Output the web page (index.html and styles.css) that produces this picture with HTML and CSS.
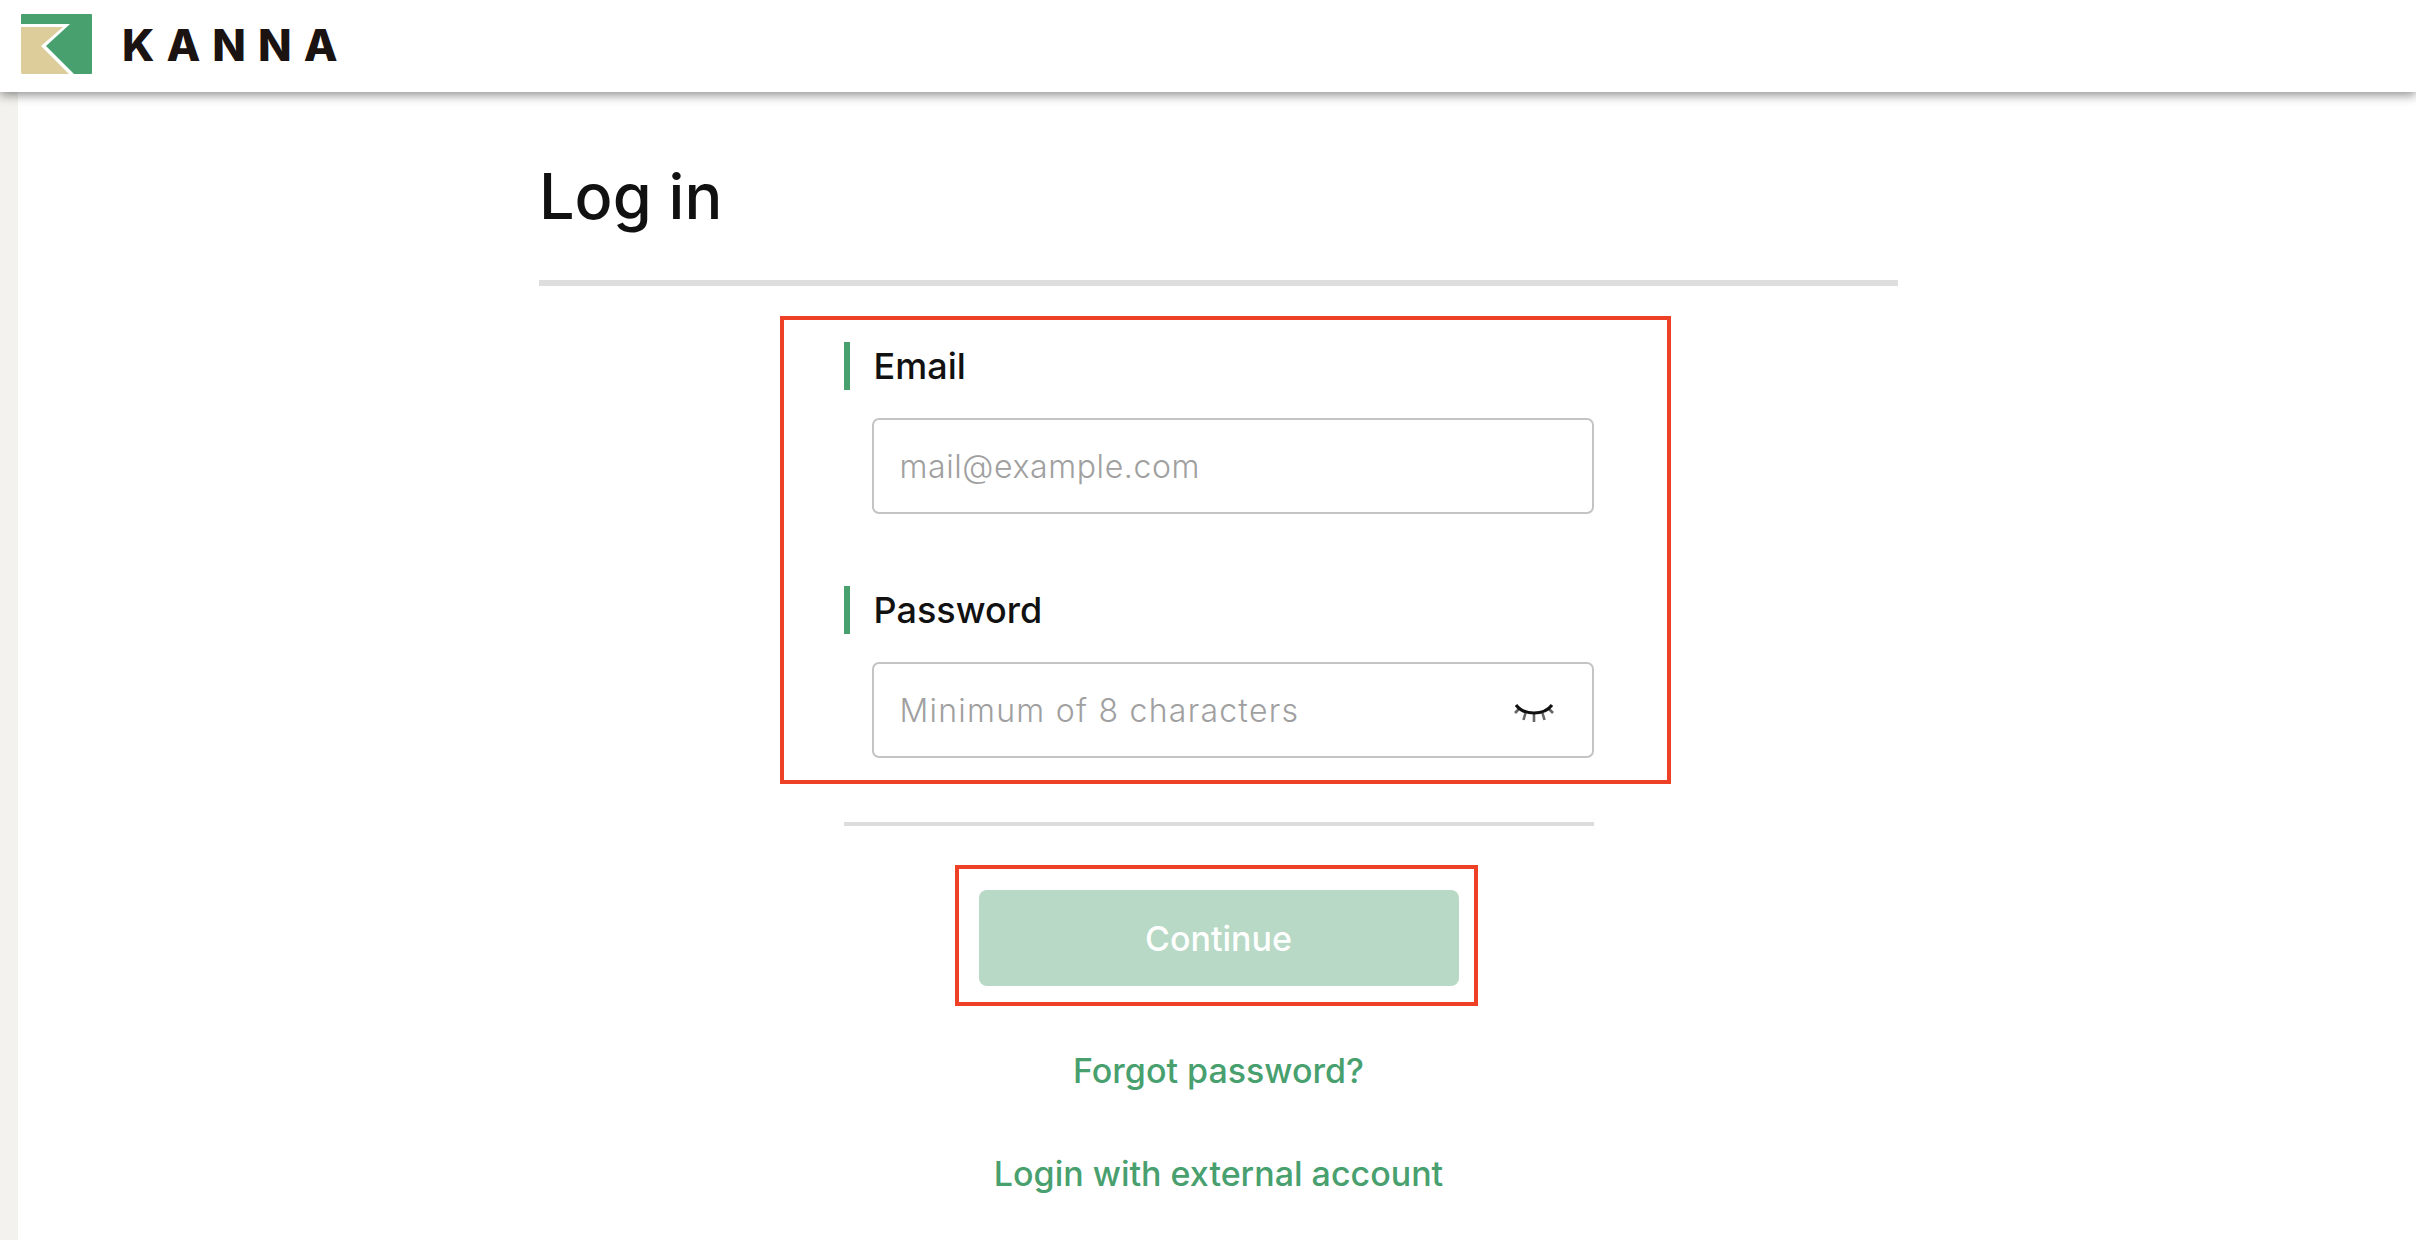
FILE: index.html
```html
<!DOCTYPE html>
<html lang="en">
<head>
<meta charset="utf-8">
<title>Log in - KANNA</title>
<link rel="stylesheet" href="styles.css">
</head>
<body>
<header class="topbar">
  <svg class="logo-mark" width="71" height="60" viewBox="0 0 71 60" aria-hidden="true">
    <rect width="71" height="60" rx="1" fill="#48a06f"/>
    <polygon points="0,10 49,10 25,32 53,60 0,60" fill="#fff"/>
    <polygon points="0,13 42,13 20,32 48,60 1,60 0,59" fill="#dccd9b"/>
  </svg>
  <span class="wordmark">KANNA</span>
</header>
<div class="shell">
  <aside class="rail"></aside>
  <main class="content">
    <h1 class="title">Log in</h1>
    <form class="form">
      <div class="field">
        <label class="label" for="email">Email</label>
        <div class="control">
          <input class="input input-email" id="email" type="text" placeholder="mail@example.com">
        </div>
      </div>
      <div class="field field-next">
        <label class="label" for="password">Password</label>
        <div class="control">
          <input class="input input-password" id="password" type="password" placeholder="Minimum of 8 characters">
          <svg class="eye" width="40" height="24" viewBox="0 0 40 24" aria-hidden="true">
            <g stroke="#666" stroke-width="2.600" fill="none">
              <path d="M5 9 1 13"/>
              <path d="M11.500 13 9.500 20"/>
              <path d="M20 14 20 22"/>
              <path d="M28.500 13 30.500 20"/>
              <path d="M35 9 39 13"/>
            </g>
            <path d="M2 5C10 15.700 30 15.700 38 5" stroke="#111" stroke-width="3" fill="none"/>
          </svg>
        </div>
      </div>
      <hr class="divider">
      <button class="submit" type="button">Continue</button>
    </form>
    <a class="link link-forgot" href="#">Forgot password?</a>
    <a class="link link-external" href="#">Login with external account</a>
    <div class="mark mark-fields"></div>
    <div class="mark mark-button"></div>
  </main>
</div>
</body>
</html>
```
FILE: styles.css
```css
* { box-sizing: border-box; }
html, body { margin: 0; height: 100%; }
body {
  background: #fff;
  font-family: Inter, "Noto Sans", sans-serif;
  color: #111;
  overflow: hidden;
}
.topbar {
  position: relative;
  z-index: 2;
  display: flex;
  align-items: center;
  height: 92px;
  padding: 0 0 0 21px;
  background: #fff;
  box-shadow: 0 3px 10px rgba(0, 0, 0, .45);
}
.logo-mark { display: block; margin-top: -4px; }
.wordmark {
  margin: -3px 0 0 30px;
  font-size: 44px;
  line-height: 1;
  font-weight: 800;
  letter-spacing: 12px;
  color: #1a1311;
}
.shell { display: flex; height: 1148px; }
.rail { flex: 0 0 18px; background: #f3f2ee; }
.content {
  position: relative;
  flex: 1;
  padding: 0 518px 0 521px;
  display: flex;
  flex-direction: column;
  align-items: center;
}
.title {
  align-self: stretch;
  height: 194px;
  margin: 0;
  padding-top: 68px;
  border-bottom: 6px solid #dedede;
  font-size: 63px;
  line-height: 72px;
  font-weight: 500;
  color: #111;
}
.form {
  width: 750px;
  margin-top: 56px;
  display: flex;
  flex-direction: column;
}
.label {
  display: flex;
  align-items: center;
  height: 48px;
  padding-left: 24px;
  border-left: 6px solid #48a06f;
  font-size: 36px;
  font-weight: 500;
  color: #111;
}
.control { position: relative; margin: 28px 0 0 28px; }
.field-next { margin-top: 72px; }
.input {
  display: block;
  width: 722px;
  height: 96px;
  padding: 0 26px;
  border: 2px solid #c4c4c4;
  border-radius: 7px;
  background: #fff;
  font-family: inherit;
  font-size: 32px;
  color: #111;
  outline: none;
}
.input::placeholder { color: #a0a0a0; opacity: 1; font-weight: 300; }
.input-email::placeholder { letter-spacing: .6px; }
.input-password::placeholder { letter-spacing: 1.250px; }
.eye { position: absolute; right: 40px; top: 38px; }
.divider {
  width: 100%;
  height: 4px;
  margin: 64px 0 0;
  border: 0;
  background: #dcdcdc;
}
.submit {
  align-self: center;
  width: 480px;
  height: 96px;
  margin: 64px 0 0;
  border: 0;
  border-radius: 8px;
  background: #b7d9c5;
  color: #fff;
  font-family: inherit;
  font-size: 34px;
  font-weight: 500;
}
.link {
  color: #48a06f;
  font-size: 34px;
  font-weight: 500;
  line-height: 40px;
  text-decoration: none;
}
.link-forgot { margin-top: 65px; }
.link-external { margin-top: 63px; }
.mark { position: absolute; border: 4px solid #ee4026; pointer-events: none; }
.mark-fields { left: 762px; top: 224px; width: 891px; height: 468px; }
.mark-button { left: 937px; top: 773px; width: 523px; height: 141px; }
```
